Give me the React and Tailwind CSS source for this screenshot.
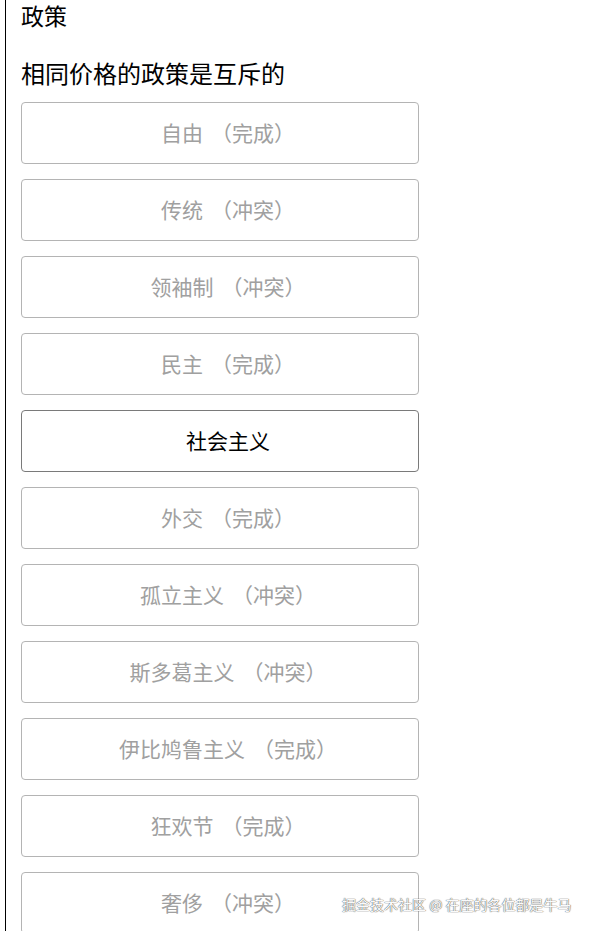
import React from 'react';

const policies = [
  { name: '自由', state: '完成' },
  { name: '传统', state: '冲突' },
  { name: '领袖制', state: '冲突' },
  { name: '民主', state: '完成' },
  { name: '社会主义', state: null },
  { name: '外交', state: '完成' },
  { name: '孤立主义', state: '冲突' },
  { name: '斯多葛主义', state: '冲突' },
  { name: '伊比鸠鲁主义', state: '完成' },
  { name: '狂欢节', state: '完成' },
  { name: '奢侈', state: '冲突' },
];

const App = () => {
  return (
    <div
      className="relative h-[931px] overflow-hidden bg-white"
      style={{ fontFamily: '"Noto Sans CJK SC", "Noto Sans", sans-serif' }}
    >
      <div className="ml-[5px] h-full border-l-[1.5px] border-black pl-[15px] pt-[1px]">
        <div className="text-[23px] leading-[28px] text-black">政策</div>
        <div className="mt-[28px] text-[24px] leading-[32px] text-black">相同价格的政策是互斥的</div>
        <div className="mt-[13px] flex flex-col gap-[15px]">
          {policies.map((p) => {
            const disabled = p.state !== null;
            return (
              <button
                key={p.name}
                disabled={disabled}
                className={`flex h-[62px] w-[398px] items-center justify-center rounded-[4px] border bg-white pl-[16px] text-[21px] ${
                  disabled ? 'border-[#b4b4b4] text-[#a0a0a0]' : 'border-[#7a7a7a] text-black'
                }`}
              >
                {p.name}
                {disabled && <span className="ml-[8px]">（{p.state}）</span>}
              </button>
            );
          })}
        </div>
      </div>
      <div
        className="absolute left-[342px] top-[894px] text-[14px] leading-[20px] text-[#fafafa]"
        style={{ textShadow: '0 0 1px #555, 0 0 1px #555' }}
      >
        掘金技术社区 @ 在座的各位都是牛马
      </div>
    </div>
  );
};

export default App;
